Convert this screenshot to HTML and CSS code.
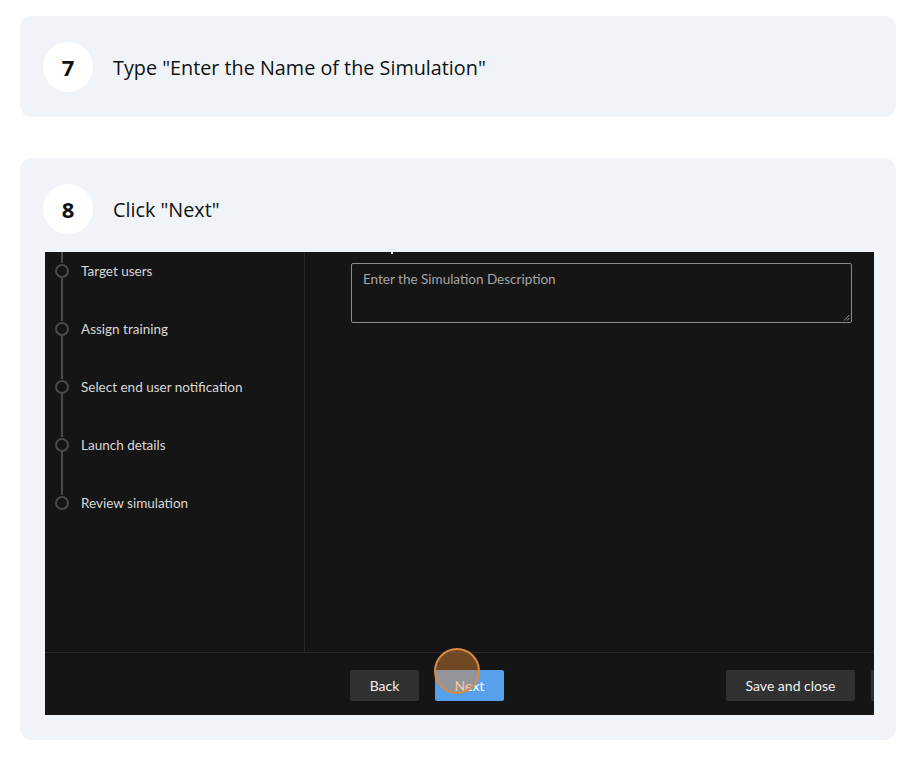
FILE: index.html
```html
<!DOCTYPE html>
<html>
<head>
<meta charset="utf-8">
<link rel="stylesheet" href="styles.css">
</head>
<body>
<div class="page">
  <section class="card">
    <div class="card-head">
      <div class="badge">7</div>
      <div class="title">Type "Enter the Name of the Simulation"</div>
    </div>
  </section>
  <section class="card">
    <div class="card-head">
      <div class="badge">8</div>
      <div class="title">Click "Next"</div>
    </div>
    <div class="shot">
      <div class="shot-main">
        <aside class="steps">
          <div class="lead-line"></div>
          <div class="step">
            <div class="rail"><span class="dot"></span><span class="line"></span></div>
            <span class="label">Target users</span>
          </div>
          <div class="step">
            <div class="rail"><span class="dot"></span><span class="line"></span></div>
            <span class="label">Assign training</span>
          </div>
          <div class="step">
            <div class="rail"><span class="dot"></span><span class="line"></span></div>
            <span class="label">Select end user notification</span>
          </div>
          <div class="step">
            <div class="rail"><span class="dot"></span><span class="line"></span></div>
            <span class="label">Launch details</span>
          </div>
          <div class="step last">
            <div class="rail"><span class="dot"></span></div>
            <span class="label">Review simulation</span>
          </div>
        </aside>
        <div class="pane">
          <div class="label-tail"><span class="descender"></span></div>
          <div class="textarea">
            <span class="placeholder">Enter the Simulation Description</span>
            <svg class="grip" width="7" height="7" viewBox="0 0 7 7"><path d="M6.5 1 L1 6.5 M6.5 4 L4 6.5" stroke="#9a9a9a" stroke-width="1" fill="none"/></svg>
          </div>
        </div>
      </div>
      <div class="footer">
        <button class="btn back">Back</button>
        <div class="next-wrap">
          <button class="btn primary">Next</button>
          <span class="click-marker"></span>
        </div>
        <div class="spacer"></div>
        <button class="btn save">Save and close</button>
        <button class="btn stub"></button>
      </div>
    </div>
  </section>
</div>
</body>
</html>
```

FILE: styles.css
```css
* { box-sizing: border-box; }
html, body { margin: 0; padding: 0; background: #ffffff; }
body { font-family: "Open Sans", "Noto Sans", sans-serif; color: #111; }

.page {
  padding: 16px 10px 0 20px;
  display: flex;
  flex-direction: column;
  gap: 41px;
}

.card {
  width: 876px;
  background: #f0f4f8;
  border-radius: 12px;
  padding: 26px 22px 25px 25px;
}

.card-head {
  display: flex;
  align-items: center;
  gap: 20px;
  height: 50px;
  margin-left: -2px;
}

.badge {
  width: 50px;
  height: 50px;
  border-radius: 50%;
  background: #ffffff;
  display: flex;
  align-items: center;
  justify-content: center;
  font-size: 22px;
  font-weight: 700;
  color: #111;
}

.title {
  font-size: 19.8px;
  color: #111;
}

.shot {
  margin-top: 18px;
  width: 829px;
  height: 463px;
  background: #151515;
  display: flex;
  flex-direction: column;
  overflow: hidden;
  font-family: "Lato", "Noto Sans", sans-serif;
}

.shot-main {
  flex: 1;
  display: flex;
  border-bottom: 1px solid #2a2a2a;
}

.steps {
  width: 260px;
  border-right: 1px solid #2a2a2a;
  padding-left: 10px;
}

.lead-line {
  width: 2px;
  height: 11px;
  background: #4a4a4a;
  margin-left: 6px;
}

.step {
  display: flex;
  align-items: flex-start;
}

.rail {
  width: 26px;
  display: flex;
  flex-direction: column;
  align-items: flex-start;
}

.dot {
  width: 14px;
  height: 14px;
  border: 2px solid #4a4a4a;
  border-radius: 50%;
  margin-top: 1px;
}

.line {
  width: 2px;
  height: 43px;
  background: #4a4a4a;
  margin-left: 6px;
}

.label {
  font-size: 13.5px;
  line-height: 16px;
  color: #d8d8d8;
}

.pane {
  flex: 1;
  padding: 0 22px 0 46px;
}

.label-tail {
  height: 11px;
  padding-left: 40px;
}

.descender {
  display: block;
  width: 2px;
  height: 2px;
  background: #e6e6e6;
}

.textarea {
  position: relative;
  height: 60px;
  border: 1px solid #8a8a8a;
  border-radius: 2px;
  padding: 4px 11px;
}

.placeholder {
  font-size: 13.5px;
  color: #a6a6a6;
}

.grip {
  position: absolute;
  right: 1px;
  bottom: 1px;
}

.footer {
  height: 62px;
  display: flex;
  align-items: center;
  padding: 0 0 0 305px;
}

.btn {
  height: 31px;
  border: none;
  border-radius: 2px;
  background: #313131;
  color: #f0f0f0;
  font-family: "Lato", "Noto Sans", sans-serif;
  font-size: 14px;
  padding: 0;
  margin-top: 3px;
}

.btn.back { width: 69px; }

.next-wrap {
  position: relative;
  margin-left: 16px;
  display: flex;
}

.btn.primary {
  width: 69px;
  background: #56a0ec;
  color: #ffffff;
}

.click-marker {
  position: absolute;
  left: -1px;
  top: -19px;
  width: 46px;
  height: 46px;
  border-radius: 50%;
  background: rgba(225, 135, 55, 0.45);
  border: 2px solid #d98a43;
}

.spacer { flex: 1; }

.btn.save { width: 129px; }

.btn.stub {
  width: 3px;
  margin-left: 16px;
  border-radius: 2px 0 0 2px;
}
```
